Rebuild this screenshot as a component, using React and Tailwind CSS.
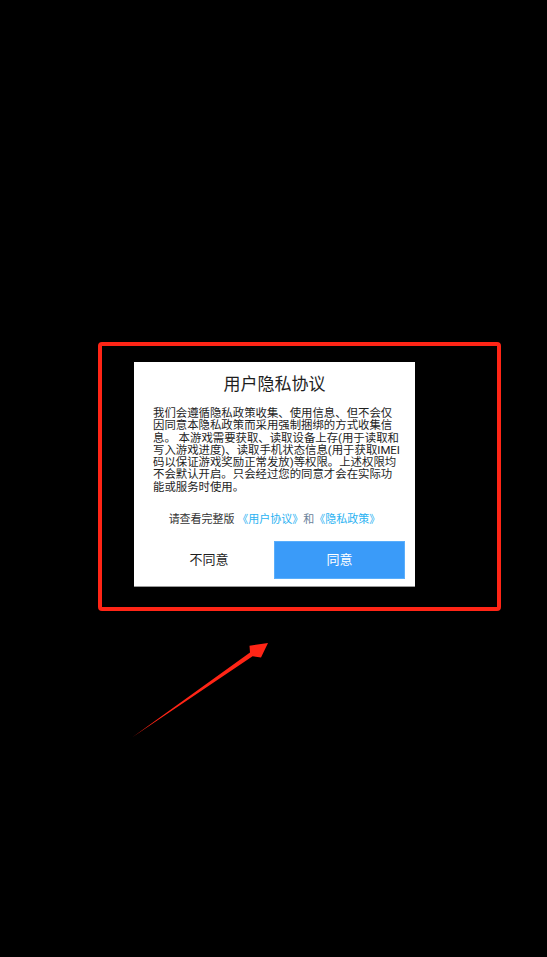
import React from "react";

const bodyLines = [
  "我们会遵循隐私政策收集、使用信息、但不会仅",
  "因同意本隐私政策而采用强制捆绑的方式收集信",
  "息。 本游戏需要获取、读取设备上存(用于读取和",
  "写入游戏进度)、读取手机状态信息(用于获取IMEI",
  "码以保证游戏奖励正常发放)等权限。上述权限均",
  "不会默认开启。只会经过您的同意才会在实际功",
  "能或服务时使用。",
];

export default function App() {
  return (
    <div className="relative w-[547px] h-[957px] bg-black overflow-hidden font-[Roboto,'Noto_Sans_CJK_SC',sans-serif]">
      {/* red highlight frame */}
      <div className="ml-[98px] pt-[342px]">
        <div className="w-[403px] h-[269px] border-4 border-[#ff2516] rounded-[4px] pl-[32px] pt-[16px]">
          {/* dialog */}
          <div className="w-[281px] h-[225px] bg-white flex flex-col border-b border-[#9a9a9a]">
            <div className="pt-[12px] h-[32px] text-center text-[17px] leading-[20px] text-[#1e1e1e]">
              用户隐私协议
            </div>
            <div className="mt-[13px] pl-[19px] text-[11.4px] leading-[12.3px] text-[#1e1e1e]">
              {bodyLines.map((line) => (
                <div key={line} className="whitespace-nowrap">
                  {line}
                </div>
              ))}
            </div>
            <div className="mt-[20px] text-center text-[11px] leading-[14px] text-[#333] whitespace-nowrap pl-[-2px]">
              请查看完整版 <span className="text-[#2ab2f2]">《用户协议》</span>
              <span className="text-[#6b8299]">和</span>
              <span className="text-[#2ab2f2]">《隐私政策》</span>
            </div>
            <div className="mt-[14px] px-[10px] flex h-[38px]">
              <button className="flex-1 flex items-center justify-center text-[13px] text-[#1e1e1e]">
                不同意
              </button>
              <button className="w-[131px] flex items-center justify-center bg-[#3a9bf9] border border-[#5aaefb] text-[13px] text-white">
                同意
              </button>
            </div>
          </div>
        </div>
      </div>

      {/* annotation arrow */}
      <svg
        className="absolute left-0 top-0 pointer-events-none"
        width="547"
        height="957"
        viewBox="0 0 547 957"
      >
        <polygon
          points="132,737.5 250,652.6 249.5,645.8 268,643 261,657.5 252.6,656.2"
          fill="#ff2516"
        />
      </svg>
    </div>
  );
}
